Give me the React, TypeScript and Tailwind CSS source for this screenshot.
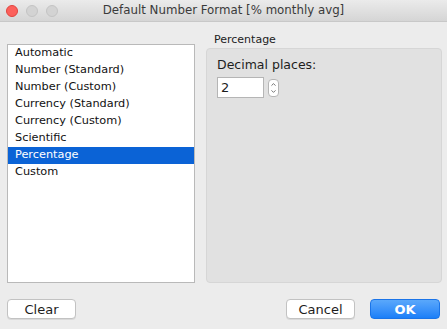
import { ChevronUp, ChevronDown } from "lucide-react";

const formats = [
  "Automatic",
  "Number (Standard)",
  "Number (Custom)",
  "Currency (Standard)",
  "Currency (Custom)",
  "Scientific",
  "Percentage",
  "Custom",
];

const selected = "Percentage";

function TrafficLight({ color }: { color: string }) {
  return <span className={`h-3 w-3 rounded-full border ${color}`} />;
}

export default function App() {
  return (
    <div
      className="flex h-[329px] w-[447px] flex-col overflow-hidden bg-[#ececec] text-[#1d1d1d]"
      style={{ fontFamily: '"DejaVu Sans", "Liberation Sans", sans-serif' }}
    >
      {/* Title bar */}
      <div className="relative flex h-[22px] shrink-0 items-center justify-center border-b border-[#c8c8c8] bg-gradient-to-b from-[#ebebeb] to-[#d5d5d5]">
        <div className="absolute left-[6px] top-[5px] flex gap-[8px]">
          <TrafficLight color="border-[#e0443e] bg-[#fc605b]" />
          <TrafficLight color="border-[#c4c4c4] bg-[#d3d3d3]" />
          <TrafficLight color="border-[#c4c4c4] bg-[#d3d3d3]" />
        </div>
        <span className="text-[11.8px] text-[#3a3a3a]">Default Number Format [% monthly avg]</span>
      </div>

      {/* Body */}
      <div className="flex items-start pl-[7px]">
        <ul className="mt-[22px] h-[239px] w-[188px] border border-[#b9b9b9] bg-white text-[11.3px]">
          {formats.map((f) => (
            <li
              key={f}
              className={
                f === selected
                  ? "flex h-[17px] items-center bg-[#0b63d6] pl-[7px] text-white"
                  : "flex h-[17px] items-center pl-[7px] text-[#111]"
              }
            >
              {f}
            </li>
          ))}
        </ul>

        <div className="ml-[11px] flex flex-col">
          <span className="mt-[11px] pl-[8px] text-[11px] leading-[14px] text-[#222]">Percentage</span>
          <div className="mt-[1px] h-[235px] w-[236px] rounded-[4px] border border-[#d6d6d6] bg-[#e1e1e1] pl-[10px] pt-[8px]">
            <div className="text-[12.5px] leading-[16px]">Decimal places:</div>
            <div className="mt-[4px] flex items-center gap-[4px]">
              <div className="flex h-[21px] w-[47px] items-center border border-[#b5b5b5] bg-white pl-[3px] text-[13px]">
                2
              </div>
              <div className="flex h-[18px] w-[11px] flex-col items-center justify-center rounded-[4px] border border-[#b5b5b5] bg-white text-[#444]">
                <ChevronUp size={7} strokeWidth={2.5} />
                <ChevronDown size={7} strokeWidth={2.5} />
              </div>
            </div>
          </div>
        </div>
      </div>

      {/* Buttons */}
      <div className="mt-[16px] flex items-center px-[7px] text-[13px]">
        <button className="h-[20px] w-[69px] rounded-[4px] border border-[#c2c2c2] bg-white leading-none shadow-[0_1px_0_rgba(0,0,0,0.08)]">
          Clear
        </button>
        <div className="flex-1" />
        <button className="h-[20px] w-[69px] rounded-[4px] border border-[#c2c2c2] bg-white leading-none shadow-[0_1px_0_rgba(0,0,0,0.08)]">
          Cancel
        </button>
        <button className="ml-[15px] h-[20px] w-[70px] rounded-[4px] border border-[#1a74e8] bg-gradient-to-b from-[#5aa8fb] to-[#1a7ff8] font-bold leading-none text-white">
          OK
        </button>
      </div>
    </div>
  );
}
